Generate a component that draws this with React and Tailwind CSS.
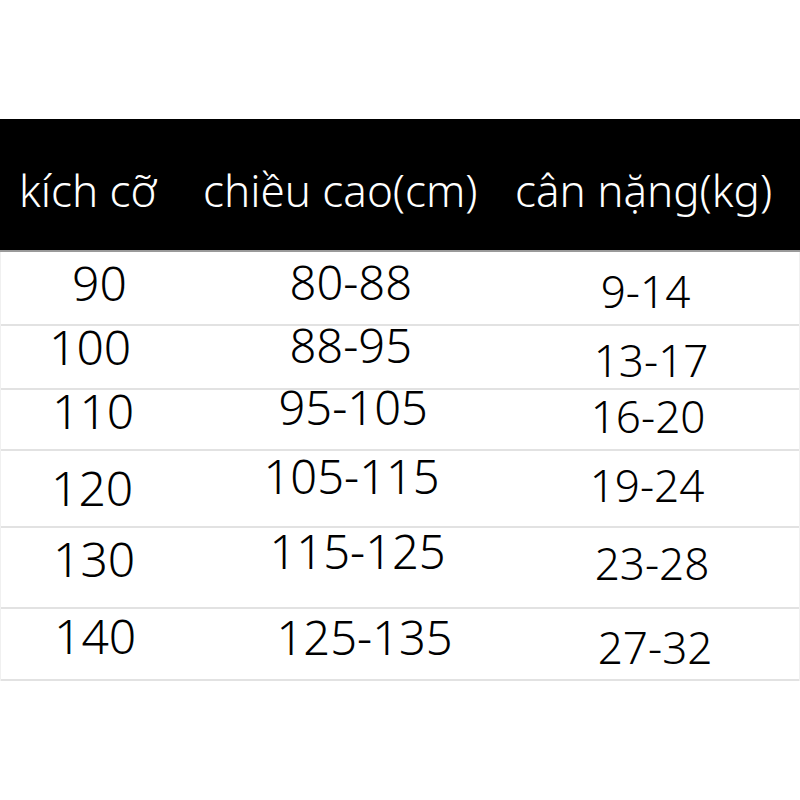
const FONT = { fontFamily: '"Noto Sans", "Open Sans", sans-serif' };

// each cell: [text, paddingLeft, paddingTop]
const rows = [
  { h: "h-[74px]", cells: [["90", "pl-[71px]", "pt-[14px]"], ["80-88", "pl-[99px]", "pt-[14px]"], ["9-14", "pl-[101px]", "pt-[24px]"]] },
  { h: "h-[64px]", cells: [["100", "pl-[48px]", "pt-[4px]"], ["88-95", "pl-[99px]", "pt-[3px]"], ["13-17", "pl-[94px]", "pt-[19px]"]] },
  { h: "h-[61px]", cells: [["110", "pl-[51px]", "pt-[4px]"], ["95-105", "pl-[88px]", "pt-[1px]"], ["16-20", "pl-[91px]", "pt-[11px]"]] },
  { h: "h-[77px]", cells: [["120", "pl-[50px]", "pt-[20px]"], ["105-115", "pl-[73px]", "pt-[9px]"], ["19-24", "pl-[90px]", "pt-[19px]"]] },
  { h: "h-[81px]", cells: [["130", "pl-[52px]", "pt-[14px]"], ["115-125", "pl-[79px]", "pt-[7px]"], ["23-28", "pl-[95px]", "pt-[20px]"]] },
  { h: "h-[72px]", cells: [["140", "pl-[53px]", "pt-[10px]"], ["125-135", "pl-[86px]", "pt-[12px]"], ["27-32", "pl-[98px]", "pt-[23px]"]] },
];

const sizes = ["text-[48px]", "text-[47px]", "text-[44px]"];
const widths = ["w-[190px]", "w-[310px]", "w-[300px]"];

export default function App() {
  return (
    <div className="w-[800px] h-[800px] bg-white text-black font-[350]" style={FONT}>
      <div className="h-[119px]" />
      <div className="flex h-[133px] bg-black text-white border-b-2 border-[#9a9a9a] text-[44px] leading-[0.7]">
        <div className="w-[190px] pl-[19px] pt-[56px]">kích cỡ</div>
        <div className="w-[310px] pl-[13px] pt-[56px]">chiều cao(cm)</div>
        <div className="w-[300px] pl-[15px] pt-[56px]">cân nặng(kg)</div>
      </div>
      <div className="border-x border-[#f0f0f0]">
        {rows.map((row, i) => (
          <div key={i} className={`flex ${row.h} border-b-2 border-[#e2e2e2]`}>
            {row.cells.map(([text, pl, pt], j) => (
              <div key={j} className={`${widths[j]} ${pl} ${pt} ${sizes[j]} leading-[0.7] whitespace-nowrap`}>
                {text}
              </div>
            ))}
          </div>
        ))}
      </div>
    </div>
  );
}
